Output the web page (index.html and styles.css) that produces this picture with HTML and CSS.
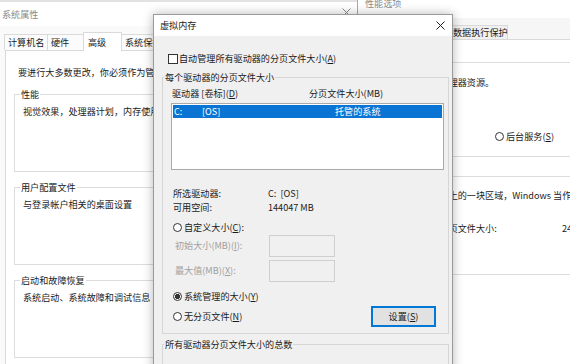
FILE: index.html
```html
<!DOCTYPE html>
<html lang="zh-CN">
<head>
<meta charset="utf-8">
<title>虚拟内存</title>
<link rel="stylesheet" href="styles.css">
</head>
<body>
<section class="win sysprops">
  <div class="sp-title">
    <span>系统属性</span>
    <svg class="x-gray" width="9" height="9" viewBox="0 0 9 9"><path d="M0.5 0.5L8.5 8.5M8.5 0.5L0.5 8.5" stroke="#8a8a8a" stroke-width="1" fill="none"/></svg>
  </div>
  <div class="sp-tabs">
    <span class="tab t1">计算机名</span>
    <span class="tab t2">硬件</span>
    <span class="tab t3 sel">高级</span>
    <span class="tab t4">系统保护</span>
    <span class="tab t5">远程</span>
  </div>
  <div class="sp-page">
    <p class="note">要进行大多数更改，你必须作为管理员登录。</p>
    <fieldset class="sp-grp">
      <legend>性能</legend>
      <p>视觉效果，处理器计划，内存使用，以及虚拟内存</p>
    </fieldset>
    <fieldset class="sp-grp">
      <legend>用户配置文件</legend>
      <p>与登录帐户相关的桌面设置</p>
    </fieldset>
    <fieldset class="sp-grp">
      <legend>启动和故障恢复</legend>
      <p>系统启动、系统故障和调试信息</p>
    </fieldset>
  </div>
</section>

<section class="win perf">
  <div class="pf-title">性能选项</div>
  <div class="pf-tabs">
    <span class="ptab pt1">视觉效果</span>
    <span class="ptab pt2 sel">高级</span>
    <span class="ptab pt3">数据执行保护</span>
  </div>
  <div class="pf-page">
    <fieldset class="pf-grp g1">
      <legend>处理器计划</legend>
      <p>选择如何分配处理器资源。</p>
      <div class="pf-radios">
        <span class="ropt"><i class="radio"></i>程序(<u>P</u>)</span>
        <span class="ropt"><i class="radio"></i>后台服务(<u>S</u>)</span>
      </div>
    </fieldset>
    <fieldset class="pf-grp g2">
      <legend>虚拟内存</legend>
      <p>分页文件是硬盘上的一块区域，Windows 当作 RAM 使用。</p>
      <div class="pf-size"><span class="pf-lbl">所有驱动器总分页文件大小:</span><span>2432 MB</span></div>
    </fieldset>
  </div>
</section>

<section class="win vmem">
  <div class="vm-title">
    <span>虚拟内存</span>
    <svg width="9" height="9" viewBox="0 0 9 9"><path d="M0.5 0.5L8.5 8.5M8.5 0.5L0.5 8.5" stroke="#1e1e1e" stroke-width="1" fill="none"/></svg>
  </div>
  <div class="vm-body">
    <div class="auto-row"><i class="check"></i>自动管理所有驱动器的分页文件大小(<u>A</u>)</div>
    <fieldset class="vm-grp g-drv">
      <legend>每个驱动器的分页文件大小</legend>
      <div class="lst-head"><span class="c-head1">驱动器 [卷标](<u>D</u>)</span><span>分页文件大小(MB)</span></div>
      <div class="listbox">
        <div class="lrow sel"><span class="lc1">C:</span><span class="lc2">[OS]</span><span>托管的系统</span></div>
      </div>
      <div class="info">
        <div class="irow"><span class="ilbl">所选驱动器:</span><span>C:&nbsp;&nbsp;[OS]</span></div>
        <div class="irow"><span class="ilbl">可用空间:</span><span>144047 MB</span></div>
      </div>
      <div class="ropt r-custom"><i class="radio"></i>自定义大小(<u>C</u>):</div>
      <div class="srow s1"><span class="slbl">初始大小(MB)(<u>I</u>):</span><span class="field"></span></div>
      <div class="srow s2"><span class="slbl">最大值(MB)(<u>X</u>):</span><span class="field"></span></div>
      <div class="ropt r-sys"><i class="radio on"></i>系统管理的大小(<u>Y</u>)</div>
      <div class="last-row">
        <div class="ropt"><i class="radio"></i>无分页文件(<u>N</u>)</div>
        <button class="btn">设置(<u>S</u>)</button>
      </div>
    </fieldset>
    <fieldset class="vm-grp g-total">
      <legend>所有驱动器分页文件大小的总数</legend>
      <div class="irow trow"><span class="ilbl">允许的最小值:</span><span>16 MB</span></div>
    </fieldset>
  </div>
</section>
</body>
</html>
```

FILE: styles.css
```css
* { box-sizing: border-box; }
html, body { margin: 0; padding: 0; }
body {
  width: 570px;
  height: 364px;
  overflow: hidden;
  position: relative;
  background: #fff;
  font-family: "Noto Sans CJK SC", "Microsoft YaHei", sans-serif;
  font-size: 9.1px;
  line-height: 13px;
  color: #1b1b1b;
}
p { margin: 0; }
u { text-decoration: underline; text-underline-offset: 1px; }
fieldset { margin: 0; min-width: 0; }
legend { padding: 0 1px; line-height: 13px; }

.win { position: absolute; }

/* ---------- 系统属性 (back left) ---------- */
.sysprops {
  left: 0; top: 0;
  width: 357px; height: 364px;
  background: #fafafa;
  border-top: 2px solid #e2e2e2;
  z-index: 1;
}
.sp-title {
  height: 24px;
  display: flex;
  align-items: center;
  justify-content: space-between;
  padding: 0 6px 0 2px;
  background: #fff;
  color: #8c8c8c;
}
.x-gray { margin-top: -3px; }
.sp-tabs {
  display: flex;
  align-items: flex-end;
  height: 18px;
  margin-top: 6px;
  padding-left: 4px;
  position: relative;
  z-index: 2;
}
.tab {
  height: 16px;
  line-height: 15px;
  padding-left: 3px;
  border: 1px solid #dadada;
  border-bottom: none;
  background: #fbfbfb;
  white-space: nowrap;
  overflow: hidden;
}
.tab + .tab { margin-left: -1px; }
.t1 { width: 44px; }
.t2 { width: 37px; }
.t3 { width: 39px; }
.t4 { width: 41px; }
.t5 { width: 36px; }
.tab.sel {
  height: 19px;
  line-height: 18px;
  padding-left: 4px;
  margin-bottom: -1px;
  background: #fff;
}
.sp-page {
  margin-left: 5px;
  height: 320px;
  border: 1px solid #d9d9d9;
  background: #fff;
  padding: 14.5px 0 0 8px;
}
.note { padding-left: 4px; }
.sp-grp {
  width: 330px;
  margin-top: 9px;
  padding: 4px 0 53px 8px;
  border: 1px solid #dcdcdc;
}
.sp-grp legend { margin-left: -3px; }

/* ---------- 性能选项 (back right) ---------- */
.perf {
  left: 357px; top: -12px;
  width: 240px; height: 400px;
  border-left: 1px solid #a9a9a9;
  background: #f6f6f6;
  z-index: 2;
}
.pf-title {
  height: 30px;
  line-height: 30px;
  padding-left: 7px;
  background: #fff;
  color: #8c8c8c;
}
.pf-tabs {
  display: flex;
  align-items: flex-end;
  height: 21px;
  padding-left: 4px;
  position: relative;
  z-index: 2;
}
.ptab {
  height: 14px;
  line-height: 13px;
  padding-left: 2px;
  border: 1px solid #d9d9d9;
  border-bottom: none;
  background: #f0f0f0;
  white-space: nowrap;
}
.pt1 { width: 47px; }
.pt2 { width: 41px; }
.pt3 { width: 58px; }
.ptab.sel { height: 17px; margin-bottom: -1px; background: #fff; }
.pf-page {
  margin-left: 3px;
  height: 340px;
  border-top: 1px solid #d9d9d9;
  border-left: 1px solid #d9d9d9;
  background: #fff;
  padding-left: 6px;
  padding-top: 15.5px;
}
.pf-grp {
  width: 240px;
  border: 1px solid #dcdcdc;
  padding-left: 16px;
}
.pf-grp legend { margin-left: -10px; }
.pf-grp.g1 { padding-top: 7px; padding-bottom: 13.5px; }
.pf-grp.g2 { margin-top: 12.5px; padding-top: 6px; padding-bottom: 39.5px; }
.pf-grp p { white-space: nowrap; }
.pf-radios {
  margin-top: 41px;
  padding-left: 15px;
  display: grid;
  grid-template-columns: 95px auto;
}
.pf-size { margin-top: 20px; display: flex; white-space: nowrap; }
.pf-lbl { width: 177px; flex: none; }

/* ---------- 虚拟内存 (front) ---------- */
.vmem {
  left: 153px; top: 14px;
  width: 300px; height: 362px;
  border: 1px solid #9a9a9a;
  background: #f0f0f0;
  box-shadow: 0 0 10px rgba(0, 0, 0, 0.28);
  z-index: 3;
}
.vm-title {
  height: 21px;
  display: flex;
  align-items: center;
  justify-content: space-between;
  padding: 0 7px 0 6px;
  background: #fff;
  color: #1b1b1b;
}
.vm-body { padding-top: 16px; }
.auto-row {
  display: flex;
  align-items: center;
  padding-left: 14px;
  white-space: nowrap;
}
.check {
  width: 10px; height: 10px;
  border: 1px solid #333;
  background: #fff;
  margin-right: 1px;
  flex: none;
}
.vm-grp {
  width: 287px;
  margin-left: 8px;
  border: 1px solid #d6d6d6;
  padding: 3px 0 6px 0;
}
.vm-grp legend { margin-left: 1px; }
.g-drv { margin-top: 6px; }
.g-total { margin-top: 4.5px; padding-top: 11px; }

.lst-head { display: flex; padding-left: 9px; white-space: nowrap; }
.c-head1 { width: 137px; flex: none; }
.listbox {
  margin: 2.5px 0 0 8px;
  width: 273px;
  height: 67px;
  border: 1px solid #a9a9a9;
  background: #fff;
  padding: 1px;
}
.lrow { display: flex; height: 13px; padding-left: 1px; white-space: nowrap; }
.lrow.sel { background: #0a74d4; color: #fff; }
.lc1 { width: 28px; flex: none; }
.lc2 { width: 133px; flex: none; }

.info { margin-top: 16.5px; padding-left: 10px; }
.irow { display: flex; line-height: 14px; white-space: nowrap; }
.ilbl { width: 95px; flex: none; }
.trow { padding-left: 10px; }

.ropt { display: flex; align-items: center; white-space: nowrap; }
.radio {
  width: 9px; height: 9px;
  border: 1px solid #333;
  border-radius: 50%;
  background: #fff;
  margin-right: 2px;
  flex: none;
}
.radio.on { background: radial-gradient(circle, #333 0 2.3px, #fff 2.9px); }
.r-custom { margin-top: 7px; padding-left: 10px; }
.r-sys { margin-top: 8.5px; padding-left: 10px; }

.srow { display: flex; align-items: center; height: 22px; padding-left: 12px; color: #a0a0a0; white-space: nowrap; }
.s1 { margin-top: 0.5px; }
.s2 { margin-top: 3px; }
.slbl { width: 94px; flex: none; }
.field { width: 66px; height: 22px; border: 1px solid #cfcfcf; background: #f0f0f0; }

.last-row {
  display: flex;
  align-items: center;
  justify-content: space-between;
  margin-top: 2.5px;
  padding-left: 10px;
  padding-right: 12px;
}
.btn {
  width: 65px; height: 21px;
  padding: 0;
  font: inherit;
  color: #1b1b1b;
  background: #e1e1e1;
  border: 1px solid #0078d7;
  box-shadow: inset 0 0 0 1px #0078d7;
}
```
